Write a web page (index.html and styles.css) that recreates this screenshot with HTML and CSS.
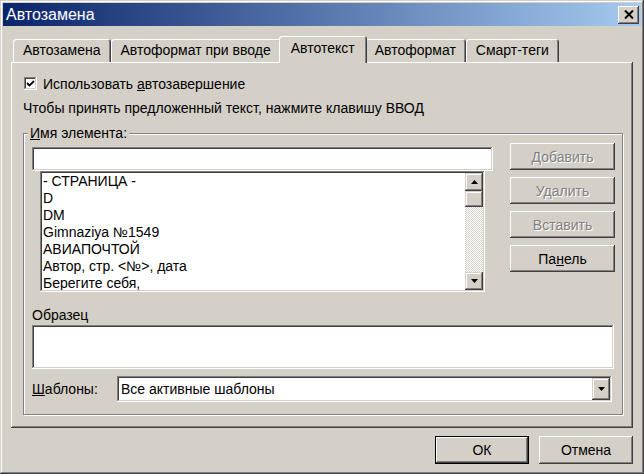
FILE: index.html
```html
<!DOCTYPE html>
<html lang="ru">
<head>
    <meta charset="UTF-8">
    <title>Автозамена</title>
    <link rel="stylesheet" href="styles.css">
</head>
<body>
    <div class="window">
        <div class="titlebar">
            <span class="title">Автозамена</span>
            <span class="close">
                <svg width="10" height="9" viewBox="0 0 10 9"><path d="M1 0.5 L9 8.5 M9 0.5 L1 8.5" stroke="#000" stroke-width="2"/></svg>
            </span>
        </div>

        <div class="tabs">
            <div class="tab">Автозамена</div>
            <div class="tab">Автоформат при вводе</div>
            <div class="tab active">Автотекст</div>
            <div class="tab">Автоформат</div>
            <div class="tab">Смарт-теги</div>
        </div>

        <div class="panel">
            <label class="check-row">
                <span class="checkbox">
                    <svg width="9" height="9" viewBox="0 0 9 9"><path d="M1 4 L3.5 6.5 L8 2" stroke="#000" stroke-width="1.8" fill="none"/></svg>
                </span>
                <span>Использовать <u>а</u>втозавершение</span>
            </label>
            <p class="hint">Чтобы принять предложенный текст, нажмите клавишу ВВОД</p>

            <fieldset class="group">
                <legend><u>И</u>мя элемента:</legend>
                <div class="name-area">
                    <div class="name-col">
                        <div class="field"></div>
                        <div class="listbox">
                            <ul class="items">
                                <li>- СТРАНИЦА -</li>
                                <li>D</li>
                                <li>DM</li>
                                <li>Gimnaziya №1549</li>
                                <li>АВИАПОЧТОЙ</li>
                                <li>Автор, стр. &lt;№&gt;, дата</li>
                                <li>Берегите себя,</li>
                            </ul>
                            <div class="scrollbar">
                                <span class="arrow-btn">
                                    <svg width="7" height="4" viewBox="0 0 7 4"><path d="M0 4 L3.5 0 L7 4Z" fill="#000"/></svg>
                                </span>
                                <span class="thumb"></span>
                                <span class="track"></span>
                                <span class="arrow-btn">
                                    <svg width="7" height="4" viewBox="0 0 7 4"><path d="M0 0 L3.5 4 L7 0Z" fill="#000"/></svg>
                                </span>
                            </div>
                        </div>
                    </div>
                    <div class="side-buttons">
                        <button class="btn disabled">Добавить</button>
                        <button class="btn disabled">Удалить</button>
                        <button class="btn disabled">Вставить</button>
                        <button class="btn">Па<u>н</u>ель</button>
                    </div>
                </div>

                <div class="sample-label">Образец</div>
                <div class="sample"></div>

                <div class="templates-row">
                    <span class="templates-label"><u>Ш</u>аблоны:</span>
                    <div class="combo">
                        <span class="combo-text">Все активные шаблоны</span>
                        <span class="arrow-btn combo-btn">
                            <svg width="7" height="4" viewBox="0 0 7 4"><path d="M0 0 L3.5 4 L7 0Z" fill="#000"/></svg>
                        </span>
                    </div>
                </div>
            </fieldset>
        </div>

        <div class="dialog-buttons">
            <button class="btn default">ОК</button>
            <button class="btn">Отмена</button>
        </div>
    </div>
</body>
</html>
```

FILE: styles.css
```css
* {
    box-sizing: border-box;
}
body {
    margin: 0;
    font-family: "Liberation Sans", Arial, sans-serif;
    font-size: 14px;
    color: #000;
    background: #d4d0c8;
}
.window {
    width: 644px;
    height: 474px;
    padding: 3px;
    background: #d4d0c8;
    box-shadow: inset -1px -1px #404040, inset 1px 1px #d4d0c8,
                inset -2px -2px #808080, inset 2px 2px #fff;
}

/* title bar */
.titlebar {
    height: 23px;
    display: flex;
    align-items: center;
    justify-content: space-between;
    padding: 0 2px 0 3px;
    background: linear-gradient(to right, #0a246a, #a6caf0);
    color: #fff;
    font-size: 16px;
}
.close {
    width: 21px;
    height: 18px;
    display: flex;
    align-items: center;
    justify-content: center;
    background: #d4d0c8;
    box-shadow: inset -1px -1px #404040, inset 1px 1px #fff,
                inset -2px -2px #808080, inset 2px 2px #d4d0c8;
}

/* tabs */
.tabs {
    display: flex;
    align-items: flex-end;
    height: 26px;
    margin: 10px 0 0 10px;
    position: relative;
    z-index: 1;
}
.tab {
    height: 23px;
    padding: 0 10px;
    line-height: 23px;
    background: #d4d0c8;
    border-radius: 3px 3px 0 0;
    box-shadow: inset 1px 1px #fff, inset -1px 0 #404040, inset -2px 0 #808080;
}
.tab.active {
    height: 27px;
    line-height: 24px;
    margin: 0 -2px -1px;
    padding: 0 12px;
    position: relative;
}

/* page */
.panel {
    height: 366px;
    margin: 0 8px;
    padding: 13px 10px 12px 12px;
    box-shadow: inset -1px -1px #404040, inset 1px 1px #fff, inset -2px -2px #808080;
}
.check-row {
    display: flex;
    align-items: center;
    gap: 6px;
    height: 17px;
    margin-left: 1px;
}
.checkbox {
    width: 13px;
    height: 13px;
    display: flex;
    align-items: center;
    justify-content: center;
    background: #fff;
    box-shadow: inset -1px -1px #fff, inset 1px 1px #808080,
                inset -2px -2px #d4d0c8, inset 2px 2px #404040;
}
.hint {
    margin: 8px 0 0;
    line-height: 17px;
}

.group {
    margin: 8px 0 0;
    padding: 2px 7px 12px 8px;
    border: 1px solid #808080;
    box-shadow: inset 1px 1px #fff, 1px 1px #fff;
}
.group legend {
    margin-left: -4px;
    padding: 0 2px;
    line-height: 16px;
    background: #d4d0c8;
}

.name-area {
    display: flex;
    align-items: flex-start;
    gap: 17px;
}
.name-col {
    width: 461px;
    margin-top: 4px;
}
.field {
    height: 24px;
    background: #fff;
    box-shadow: inset -1px -1px #fff, inset 1px 1px #808080,
                inset -2px -2px #d4d0c8, inset 2px 2px #404040;
}
.listbox {
    display: flex;
    width: 445px;
    height: 121px;
    margin-left: 8px;
    padding: 2px;
    background: #fff;
    box-shadow: inset -1px -1px #fff, inset 1px 1px #808080,
                inset -2px -2px #d4d0c8, inset 2px 2px #404040;
}
.items {
    flex: 1;
    margin: 0;
    padding: 0 0 0 1px;
    list-style: none;
    line-height: 17px;
    overflow: hidden;
}
.scrollbar {
    width: 18px;
    display: flex;
    flex-direction: column;
}
.arrow-btn {
    height: 18px;
    display: flex;
    align-items: center;
    justify-content: center;
    background: #d4d0c8;
    box-shadow: inset -1px -1px #404040, inset 1px 1px #d4d0c8,
                inset -2px -2px #808080, inset 2px 2px #fff;
}
.thumb {
    height: 16px;
    background: #d4d0c8;
    box-shadow: inset -1px -1px #404040, inset 1px 1px #d4d0c8,
                inset -2px -2px #808080, inset 2px 2px #fff;
}
.track {
    flex: 1;
    background: repeating-conic-gradient(#fff 0 25%, #d4d0c8 0 50%) 0 0 / 2px 2px;
}

.side-buttons {
    width: 105px;
    display: flex;
    flex-direction: column;
    gap: 7px;
}

/* buttons */
.btn {
    height: 27px;
    padding: 0;
    border: 0;
    font: inherit;
    color: #000;
    background: #d4d0c8;
    box-shadow: inset -1px -1px #404040, inset 1px 1px #fff,
                inset -2px -2px #808080, inset 2px 2px #d4d0c8;
}
.btn.disabled {
    color: #808080;
    text-shadow: 1px 1px #fff;
}
.btn.default {
    box-shadow: inset 0 0 0 1px #000, inset -2px -2px #404040, inset 2px 2px #fff,
                inset -3px -3px #808080;
}

.sample-label {
    margin-top: 15px;
    line-height: 17px;
}
.sample {
    height: 44px;
    margin-top: 1px;
    width: 582px;
    background: #fff;
    box-shadow: inset -1px -1px #fff, inset 1px 1px #808080,
                inset -2px -2px #d4d0c8, inset 2px 2px #404040;
}

.templates-row {
    display: flex;
    align-items: center;
    margin-top: 7px;
}
.templates-label {
    width: 85px;
}
.combo {
    width: 495px;
    height: 26px;
    display: flex;
    align-items: center;
    justify-content: space-between;
    padding: 2px;
    background: #fff;
    box-shadow: inset -1px -1px #fff, inset 1px 1px #808080,
                inset -2px -2px #d4d0c8, inset 2px 2px #404040;
}
.combo-text {
    padding-left: 2px;
}
.combo-btn {
    width: 18px;
    height: 22px;
}

.dialog-buttons {
    display: flex;
    justify-content: flex-end;
    gap: 10px;
    margin-top: 8px;
    padding-right: 8px;
}
.dialog-buttons .btn {
    width: 94px;
    height: 28px;
}
```
